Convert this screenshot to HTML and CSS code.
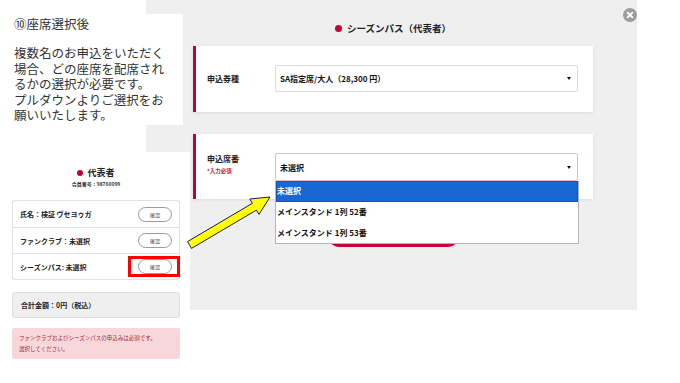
FILE: index.html
```html
<!DOCTYPE html>
<html lang="ja">
<head>
<meta charset="utf-8">
<title>座席選択</title>
<link rel="stylesheet" href="styles.css">
</head>
<body>
<div class="stage">
  <div class="modal">
    <span class="close" aria-label="閉じる">
      <svg viewBox="0 0 14 14" width="14" height="14"><path d="M4.6 4.6 L9.4 9.4 M9.4 4.6 L4.6 9.4" stroke="#fff" stroke-width="1.8" stroke-linecap="round"/></svg>
    </span>
    <h2 class="modal-title"><span class="dot"></span>シーズンパス（代表者）</h2>
    <section class="card card-first">
      <div class="label">申込券種</div>
      <div class="select"><span>SA指定席/大人（28,300 円）</span><span class="caret"></span></div>
    </section>
    <section class="card card-second">
      <div class="label">申込席番<span class="req">*入力必須</span></div>
      <div class="select select-open"><span>未選択</span><span class="caret"></span>
        <ul class="dropdown">
          <li class="active">未選択</li>
          <li>メインスタンド 1列 52番</li>
          <li>メインスタンド 1列 53番</li>
        </ul>
      </div>
    </section>
    <div class="next-btn"></div>
  </div>

  <aside class="note">
    <h1 class="note-title">⑩座席選択後</h1>
    <p class="note-text"><span class="ln">複数名のお申込をいただく</span><span class="ln">場合、どの座席を配席され</span><span class="ln">るかの選択が必要です。</span><span class="ln">プルダウンよりご選択をお</span><span class="ln">願いいたします。</span></p>
  </aside>

  <aside class="member">
    <h3 class="member-title"><span class="dot small"></span>代表者</h3>
    <div class="member-no">会員番号：98760099</div>
    <div class="member-card">
      <div class="row"><span>氏名：検証 ヴセヨゥガ</span><span class="pill">確認</span></div>
      <div class="row"><span>ファンクラブ：未選択</span><span class="pill">確認</span></div>
      <div class="row row-mark"><span>シーズンパス: 未選択</span><span class="pill">確認</span><span class="mark"></span></div>
    </div>
    <div class="total">合計金額：0円（税込）</div>
    <div class="alert">ファンクラブおよびシーズンパスの申込みは必須です。<br>選択してください。</div>
  </aside>

  <svg class="arrow" viewBox="0 0 680 383" width="680" height="383">
    <polygon points="187.5,241.6 252.4,203.3 249.8,199 270,197 259,214.4 256.4,210.1 191.5,248.4" fill="#ffff00" stroke="#1c1c50" stroke-width="1" stroke-linejoin="miter"/>
  </svg>
</div>
</body>
</html>
```

FILE: styles.css
```css
* { box-sizing: border-box; }
html, body { margin: 0; padding: 0; background: #fff; }
body {
  font-family: "Noto Sans CJK JP", "Noto Sans", sans-serif;
  color: #222;
}
.stage {
  position: relative;
  width: 680px;
  height: 383px;
  overflow: hidden;
}

/* modal */
.modal {
  position: relative;
  margin-left: 146px;
  width: 491px;
  height: 310px;
  background: #efefef;
  padding: 21px 0 0 47px;
  display: flex;
  flex-direction: column;
}
.close {
  position: absolute;
  left: 477px;
  top: 8px;
  width: 14px;
  height: 14px;
  border-radius: 50%;
  background: #9d9d9f;
  display: flex;
}
.modal-title {
  width: 400px;
  margin: 0 0 11px;
  height: 14px;
  line-height: 14px;
  font-size: 9.5px;
  font-weight: 700;
  text-align: center;
  color: #222;
  display: flex;
  justify-content: center;
  align-items: center;
}
.dot {
  display: inline-block;
  width: 7px;
  height: 7px;
  border-radius: 50%;
  background: #c4003a;
  margin-right: 5px;
}
.dot.small { width: 6px; height: 6px; margin-right: 4px; }

.card {
  width: 400px;
  background: #fff;
  border-left: 3px solid #c4003a;
  box-shadow: 0 1px 3px rgba(0, 0, 0, 0.08);
  display: flex;
  align-items: center;
  padding: 0 15px 0 11px;
}
.card-first { height: 66px; }
.card-second { height: 65px; margin-top: 22px; position: relative; z-index: 2; }
.label {
  width: 68px;
  font-size: 8px;
  font-weight: 700;
  line-height: 12px;
  display: flex;
  flex-direction: column;
  color: #222;
}
.req {
  color: #d0103a;
  font-size: 5.5px;
  line-height: 9px;
  margin-top: 2px;
}
.card-second .label { margin-top: -4px; }
.select {
  position: relative;
  width: 303px;
  height: 27px;
  border: 1px solid #dcdcdc;
  border-radius: 2px;
  background: #fff;
  display: flex;
  align-items: center;
  justify-content: space-between;
  padding: 0 6px 0 4px;
  font-size: 8px;
  font-weight: 700;
  color: #111;
}
.card-first .select { margin-top: -2px; }
.select-open {
  height: 28px;
  border: 1px solid #e9b8c8;
  margin-top: 1px;
}
.caret {
  width: 0;
  height: 0;
  border-left: 2.5px solid transparent;
  border-right: 2.5px solid transparent;
  border-top: 3.5px solid #111;
}
.dropdown {
  position: absolute;
  left: -1px;
  top: 27px;
  width: 304px;
  height: 63px;
  margin: 0;
  padding: 0;
  list-style: none;
  background: #fff;
  border: 1px solid #b5b5b5;
  border-top: 0;
  z-index: 3;
}
.dropdown li {
  height: 20.5px;
  line-height: 20px;
  padding-left: 1px;
  font-size: 8px;
  font-weight: 700;
  color: #111;
}
.dropdown li.active {
  background: #1967d2;
  color: #fff;
  height: 21px;
  box-shadow: inset 0 0 0 1px #1257c0;
}
.next-btn {
  position: absolute;
  left: 181px;
  top: 222px;
  width: 133px;
  height: 25px;
  border-radius: 13px;
  background: #c4003a;
  z-index: 1;
}

/* note */
.note {
  position: absolute;
  left: 0;
  top: 14px;
  width: 183px;
  height: 111px;
  background: #fff;
  padding: 2px 0 0 14px;
  color: #333;
}
.note-title {
  margin: 0;
  font-size: 12.5px;
  font-weight: 400;
  line-height: 16px;
}
.note-text {
  margin: 13px 0 0;
  font-size: 12.5px;
  line-height: 15.5px;
  white-space: nowrap;
  display: flex;
  flex-direction: column;
}
.ln {
  display: block;
  height: 15.5px;
  line-height: 15.5px;
}

/* member panel */
.member {
  position: absolute;
  left: 0;
  top: 152px;
  width: 190px;
  height: 231px;
  background: #fff;
  padding: 15px 10px 0 12px;
}
.member-title {
  margin: 0;
  font-size: 9px;
  font-weight: 700;
  line-height: 12px;
  display: flex;
  justify-content: center;
  align-items: center;
  color: #222;
}
.member-no {
  font-size: 5px;
  font-weight: 700;
  line-height: 8px;
  text-align: center;
  color: #333;
  margin-top: 1px;
}
.member-card {
  margin-top: 12px;
  width: 168px;
  border: 1px solid #e2e2e2;
  border-radius: 3px;
}
.row {
  position: relative;
  height: 26px;
  display: flex;
  align-items: center;
  justify-content: space-between;
  padding: 0 7px;
  font-size: 7px;
  font-weight: 700;
  color: #222;
  border-top: 1px solid #e2e2e2;
}
.row:first-child { border-top: 0; }
.pill {
  width: 34px;
  height: 15px;
  border: 1px solid #9a9a9a;
  border-radius: 8px;
  font-size: 5px;
  font-weight: 400;
  display: flex;
  align-items: center;
  justify-content: center;
  color: #444;
  background: #fff;
}
.mark {
  position: absolute;
  right: -1px;
  top: 2px;
  width: 52px;
  height: 21px;
  border: 3px solid #ff0000;
}
.total {
  margin-top: 12px;
  width: 168px;
  height: 26px;
  background: #efefef;
  border: 1px solid #dedede;
  border-radius: 3px;
  padding-left: 8px;
  display: flex;
  align-items: center;
  font-size: 7px;
  font-weight: 700;
  color: #222;
}
.alert {
  margin-top: 10px;
  width: 168px;
  height: 31px;
  background: #f8d7da;
  border-radius: 2px;
  padding: 5px 0 0 7px;
  font-size: 5.5px;
  line-height: 10.5px;
  color: #9b2a3a;
}

.arrow {
  position: absolute;
  left: 0;
  top: 0;
  pointer-events: none;
  z-index: 5;
}
```
